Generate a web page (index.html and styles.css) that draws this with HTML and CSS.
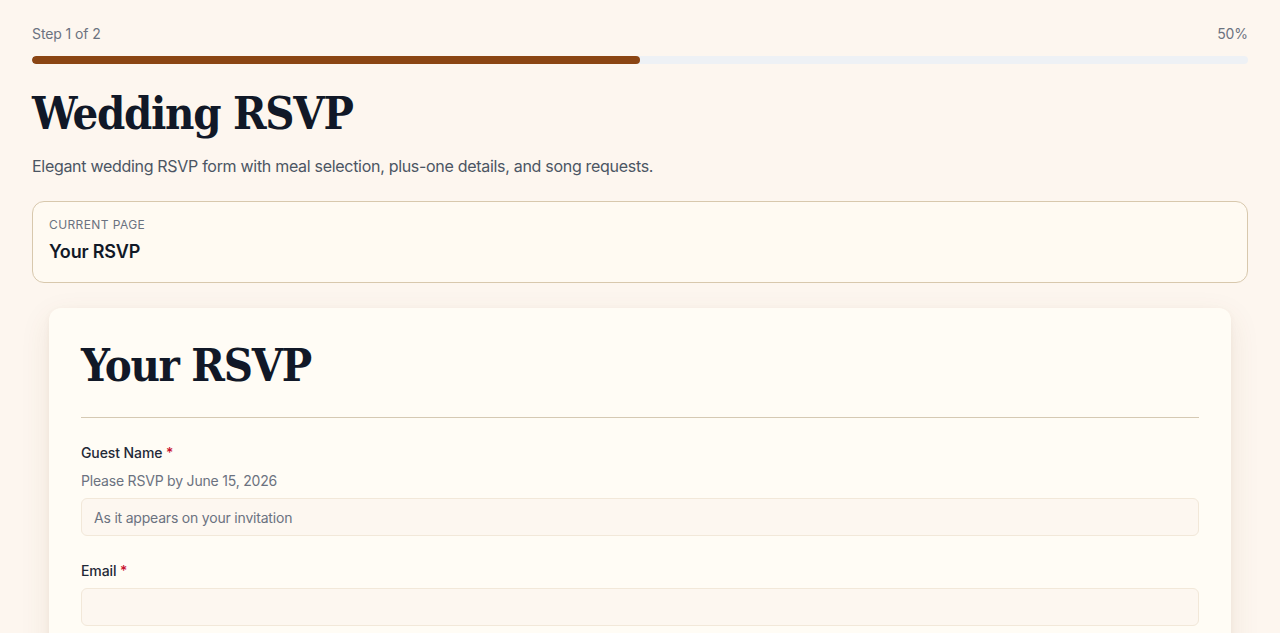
FILE: index.html
```html
<!DOCTYPE html>
<html lang="en">
<head>
<meta charset="utf-8">
<title>Wedding RSVP</title>
<link rel="stylesheet" href="styles.css">
</head>
<body>
<div class="page">
  <div class="progress-head">
    <span>Step 1 of 2</span>
    <span>50%</span>
  </div>
  <div class="progress-track"><div class="progress-fill" style="width:50%"></div></div>
  <h1 class="title">Wedding RSVP</h1>
  <p class="subtitle">Elegant wedding RSVP form with meal selection, plus-one details, and song requests.</p>
  <div class="current">
    <div class="current-label">Current page</div>
    <div class="current-name">Your RSVP</div>
  </div>
  <form class="card">
    <h2 class="card-title">Your RSVP</h2>
    <div class="field">
      <label class="label" for="guest">Guest Name <span class="req">*</span></label>
      <p class="hint">Please RSVP by June 15, 2026</p>
      <input class="input" id="guest" type="text" placeholder="As it appears on your invitation">
    </div>
    <div class="field">
      <label class="label" for="email">Email <span class="req">*</span></label>
      <input class="input" id="email" type="email">
    </div>
  </form>
</div>
</body>
</html>
```
FILE: styles.css
```css
* { box-sizing: border-box; }
html, body { margin: 0; padding: 0; }
body {
  background: #fdf6ef;
  font-family: Inter, "Noto Sans", sans-serif;
  color: #111827;
}
.page {
  padding: 24px 32px 32px;
}
.progress-head {
  display: flex;
  justify-content: space-between;
  font-size: 14px;
  line-height: 20px;
  letter-spacing: -0.1px;
  color: #6b7280;
}
.progress-track {
  margin-top: 12px;
  height: 8px;
  border-radius: 4px;
  background: #eef1f5;
  overflow: hidden;
}
.progress-fill {
  height: 100%;
  background: #8b4513;
  border-radius: 4px;
}
.title {
  margin: 20px 0 0;
  font-family: "DejaVu Serif Condensed", "DejaVu Serif", "Liberation Serif", serif;
  font-stretch: condensed;
  font-weight: 700;
  font-size: 45px;
  line-height: 60px;
  letter-spacing: -1.3px;
  color: #111827;
}
.subtitle {
  margin: 10px 0 0;
  font-size: 16px;
  line-height: 24px;
  letter-spacing: -0.3px;
  color: #4b5563;
}
.current {
  margin-top: 23px;
  border: 1px solid #d8c8ad;
  border-radius: 12px;
  background: #fffaf2;
  padding: 15px 16px 16px;
}
.current-label {
  font-size: 12px;
  line-height: 16px;
  letter-spacing: 0.4px;
  text-transform: uppercase;
  color: #6b7280;
}
.current-name {
  margin-top: 5px;
  font-size: 18px;
  line-height: 28px;
  font-weight: 600;
  letter-spacing: -0.2px;
  color: #111827;
}
.card {
  margin: 25px 17px 0;
  background: #fffcf5;
  border-radius: 12px;
  padding: 32px;
  box-shadow: 0 10px 30px rgba(120, 80, 40, 0.10), 0 2px 6px rgba(120, 80, 40, 0.05);
}
.card-title {
  margin: 0 0 25px;
  padding-bottom: 25px;
  border-bottom: 1px solid #d5c9b3;
  font-family: "DejaVu Serif Condensed", "DejaVu Serif", "Liberation Serif", serif;
  font-stretch: condensed;
  font-weight: 700;
  font-size: 45px;
  line-height: 52px;
  letter-spacing: -1.3px;
  color: #111827;
}
.field + .field { margin-top: 25px; }
.label {
  display: block;
  font-size: 14px;
  line-height: 20px;
  font-weight: 500;
  letter-spacing: -0.1px;
  color: #1f2937;
}
.req { color: #c8102e; }
.hint {
  margin: 8px 0 0;
  font-size: 14px;
  line-height: 20px;
  letter-spacing: -0.2px;
  color: #6b7280;
}
.input {
  display: block;
  width: 100%;
  margin-top: 7px;
  height: 38px;
  padding: 8px 12px;
  font-family: Inter, "Noto Sans", sans-serif;
  font-size: 14px;
  line-height: 20px;
  letter-spacing: -0.2px;
  color: #111827;
  background: #fdf7f0;
  border: 1px solid #f2e8d9;
  border-radius: 6px;
  outline: none;
}
.input::placeholder { color: #6b7280; }
```
